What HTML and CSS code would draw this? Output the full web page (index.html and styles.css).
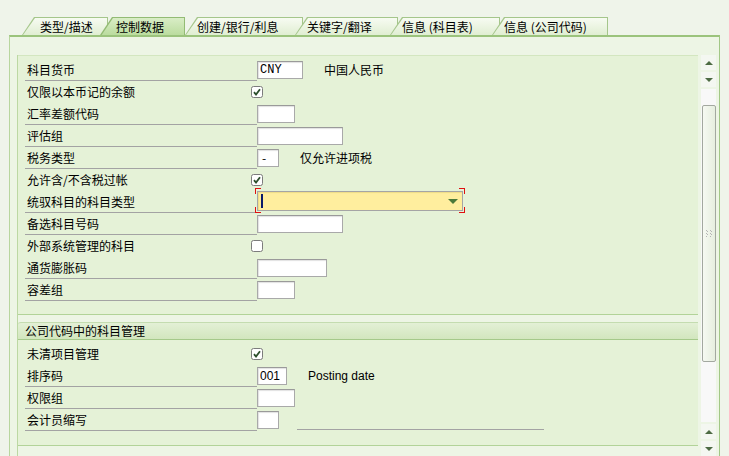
FILE: index.html
```html
<!DOCTYPE html>
<html>
<head>
<meta charset="utf-8">
<link rel="stylesheet" href="styles.css">
</head>
<body>
<div class="tabs">
  <div class="tab t1"><span class="tab-in">类型/描述</span></div>
  <div class="tab t2 active"><span class="tab-in">控制数据</span></div>
  <div class="tab t3"><span class="tab-in">创建/银行/利息</span></div>
  <div class="tab t4"><span class="tab-in">关键字/翻译</span></div>
  <div class="tab t5"><span class="tab-in">信息 (科目表)</span></div>
  <div class="tab t6"><span class="tab-in">信息 (公司代码)</span></div>
</div>
<div class="panel">
  <div class="scroll">
    <div class="group g1">
      <div class="row"><div class="lbl ul">科目货币</div><div class="inp w46 mono">CNY</div><div class="txt">中国人民币</div></div>
      <div class="row"><div class="lbl">仅限以本币记的余额</div><svg class="chk" width="12" height="12" viewBox="0 0 12 12"><rect x="0.5" y="0.5" width="11" height="11" rx="2" fill="#fff" stroke="#7c7c7c"/><path d="M3 6.2 L5 8.6 L9 3.2" stroke="#2c4f2c" stroke-width="1.8" fill="none"/></svg></div>
      <div class="row"><div class="lbl ul">汇率差额代码</div><div class="inp w38"></div></div>
      <div class="row"><div class="lbl ul">评估组</div><div class="inp w86"></div></div>
      <div class="row"><div class="lbl ul">税务类型</div><div class="inp w22 dash">-</div><div class="txt">仅允许进项税</div></div>
      <div class="row"><div class="lbl">允许含/不含税过帐</div><svg class="chk" width="12" height="12" viewBox="0 0 12 12"><rect x="0.5" y="0.5" width="11" height="11" rx="2" fill="#fff" stroke="#7c7c7c"/><path d="M3 6.2 L5 8.6 L9 3.2" stroke="#2c4f2c" stroke-width="1.8" fill="none"/></svg></div>
      <div class="row"><div class="lbl ul">统驭科目的科目类型</div><div class="focus"><div class="dd"><span class="caret"></span><span class="ddarrow"></span></div></div></div>
      <div class="row"><div class="lbl ul">备选科目号码</div><div class="inp w86"></div></div>
      <div class="row"><div class="lbl">外部系统管理的科目</div><svg class="chk" width="12" height="12" viewBox="0 0 12 12"><rect x="0.5" y="0.5" width="11" height="11" rx="2" fill="#fff" stroke="#7c7c7c"/></svg></div>
      <div class="row"><div class="lbl ul">通货膨胀码</div><div class="inp w70"></div></div>
      <div class="row"><div class="lbl ul">容差组</div><div class="inp w38"></div></div>
    </div>
    <div class="group g2">
      <div class="ghead">公司代码中的科目管理</div>
      <div class="row"><div class="lbl">未清项目管理</div><svg class="chk" width="12" height="12" viewBox="0 0 12 12"><rect x="0.5" y="0.5" width="11" height="11" rx="2" fill="#fff" stroke="#7c7c7c"/><path d="M3 6.2 L5 8.6 L9 3.2" stroke="#2c4f2c" stroke-width="1.8" fill="none"/></svg></div>
      <div class="row"><div class="lbl ul">排序码</div><div class="inp w30 latin">001</div><div class="txt latin">Posting date</div></div>
      <div class="row"><div class="lbl ul">权限组</div><div class="inp w38"></div></div>
      <div class="row"><div class="lbl ul">会计员缩写</div><div class="inp w22"></div><div class="fline"></div></div>
    </div>
  </div>
  <div class="sbar">
    <div class="sbtn"><span class="up"></span></div>
    <div class="sbtn"><span class="down"></span></div>
    <div class="track"><div class="thumb"><svg width="6" height="7" viewBox="0 0 6 7"><g fill="#b5b5b5"><rect x="0" y="0" width="1" height="1"/><rect x="0" y="3" width="1" height="1"/><rect x="0" y="6" width="1" height="1"/><rect x="4" y="0" width="1" height="1"/><rect x="4" y="3" width="1" height="1"/><rect x="4" y="6" width="1" height="1"/><rect x="1" y="1" width="1" height="1"/><rect x="1" y="4" width="1" height="1"/><rect x="5" y="1" width="1" height="1"/><rect x="5" y="4" width="1" height="1"/></g></svg></div></div>
    <div class="sbtn"><span class="up"></span></div>
    <div class="sbtn"><span class="down"></span></div>
  </div>
</div>
</body>
</html>
```
FILE: styles.css
```css
html, body {
  margin: 0;
  padding: 0;
}
body {
  width: 729px;
  height: 456px;
  overflow: hidden;
  background: #eff4ea;
  font-family: "Noto Sans CJK SC", "Liberation Sans", sans-serif;
  font-size: 12px;
  color: #000;
}

/* tabs */
.tabs {
  display: flex;
  padding: 17px 0 0 22px;
  height: 18px;
}
.tab {
  position: relative;
  height: 18px;
  margin-right: -8px;
  background: #a5c68b;
  clip-path: polygon(0 100%, 12px 0, 100% 0, 100% 100%);
}
.tab-in {
  display: block;
  height: 17px;
  margin: 1px 1px 0 1px;
  line-height: 17px;
  white-space: nowrap;
  background: linear-gradient(#f7fbf2, #e0eed2);
  clip-path: polygon(0 100%, 12px 0, 100% 0, 100% 100%);
}
.t1 { width: 86px; }
.t1 .tab-in { padding-left: 17px; }
.t2 { width: 85px; margin-right: 0; z-index: 2; }
.t2 .tab-in { padding-left: 15px; }
.t3 { width: 118px; }
.t3 .tab-in { padding-left: 11px; }
.t4 { width: 103px; }
.t4 .tab-in { padding-left: 11px; }
.t5 { width: 110px; }
.t5 .tab-in { padding-left: 11px; }
.t6 { width: 116px; }
.t6 .tab-in { padding-left: 11px; }
.active { background: #93bb74; }
.active .tab-in {
  height: 18px;
  background: linear-gradient(#d9edc6, #b9db9c);
}

/* panel */
.panel {
  box-sizing: border-box;
  margin-left: 9px;
  width: 711px;
  height: 421px;
  border-top: 2px solid #9bc37c;
  border-left: 1px solid #b8d69e;
  border-right: 1px solid #a2c786;
  background: #edf5e5;
  padding: 18px 0 0 7px;
  display: flex;
  align-items: flex-start;
}
.scroll {
  width: 680px;
  height: 401px;
  border-left: 1px solid #bcd8a3;
  display: flex;
  flex-direction: column;
}
.group {
  background: #e5f2d7;
  padding-left: 7px;
}
.g1 {
  border-top: 1px solid #d3e6c0;
  border-bottom: 1px solid #b2d398;
  padding-top: 4px;
  height: 254px;
}
.g2 {
  margin-top: 7px;
  border-bottom: 1px solid #b2d398;
  height: 123px;
  padding-left: 0;
}
.g2 .row { margin-left: 7px; }
.ghead {
  box-sizing: border-box;
  height: 18px;
  line-height: 16px;
  padding-left: 7px;
  border-top: 1px solid #c4dcb0;
  border-bottom: 1px solid #a5c98a;
  border-top-left-radius: 3px;
  background: linear-gradient(#e3f0d6, #d2e6be);
  margin-bottom: 4px;
}

/* rows */
.row {
  display: flex;
  align-items: flex-start;
  height: 22px;
}
.lbl {
  box-sizing: border-box;
  width: 232px;
  height: 21px;
  line-height: 20px;
  padding-left: 2px;
  white-space: nowrap;
}
.lbl.ul { border-bottom: 1px solid #a3a3a3; }
.inp {
  box-sizing: border-box;
  height: 18px;
  margin-top: 1px;
  background: #fff;
  border: 1px solid #a9a9a9;
  border-top-color: #9a9a9a;
  box-shadow: inset 1px 1px 1px #e2e2e2;
  line-height: 16px;
  padding-left: 2px;
  overflow: hidden;
}
.w22 { width: 22px; }
.w30 { width: 30px; }
.w38 { width: 38px; }
.w46 { width: 46px; }
.w70 { width: 70px; }
.w86 { width: 86px; }
.mono {
  font-family: "Liberation Mono", monospace;
  font-size: 12px;
}
.latin {
  font-family: "Liberation Sans", sans-serif;
  font-size: 12px;
}
.dash { padding-left: 4px; }
.txt {
  margin-left: 21px;
  line-height: 20px;
  white-space: nowrap;
}
.chk {
  display: block;
  margin: 4px 0 0 -6px;
}
.fline {
  width: 247px;
  height: 19px;
  margin-left: 18px;
  border-bottom: 1px solid #a3a3a3;
}

/* focused dropdown */
.focus {
  margin: -4px 0 0 -2px;
  padding: 3px 2px 2px 2px;
  background:
    linear-gradient(#e01010, #e01010) left top / 6px 1px no-repeat,
    linear-gradient(#e01010, #e01010) left top / 1px 6px no-repeat,
    linear-gradient(#e01010, #e01010) right top / 6px 1px no-repeat,
    linear-gradient(#e01010, #e01010) right top / 1px 6px no-repeat,
    linear-gradient(#e01010, #e01010) left bottom / 6px 1px no-repeat,
    linear-gradient(#e01010, #e01010) left bottom / 1px 6px no-repeat,
    linear-gradient(#e01010, #e01010) right bottom / 6px 1px no-repeat,
    linear-gradient(#e01010, #e01010) right bottom / 1px 6px no-repeat;
}
.dd {
  box-sizing: border-box;
  width: 206px;
  height: 20px;
  background: #ffee9e;
  border: 1px solid #a5a5a5;
  box-shadow: inset 1px 1px 1px #eedb88;
  display: flex;
  align-items: center;
  justify-content: space-between;
  padding: 0 4px 0 3px;
}
.caret {
  width: 2px;
  height: 14px;
  background: #0a1a6a;
}
.ddarrow {
  width: 0;
  height: 0;
  border-left: 5px solid transparent;
  border-right: 5px solid transparent;
  border-top: 5px solid #4c7a3a;
}

/* scrollbar */
.sbar {
  width: 15px;
  height: 401px;
  margin-left: 3px;
  display: flex;
  flex-direction: column;
}
.sbtn {
  height: 15px;
  background: #f4f7f1;
  display: flex;
  align-items: center;
  justify-content: center;
  margin-bottom: 2px;
}
.sbtn:last-child { margin-bottom: 0; }
.up {
  width: 0;
  height: 0;
  border-left: 4px solid transparent;
  border-right: 4px solid transparent;
  border-bottom: 4px solid #4d6b43;
}
.down {
  width: 0;
  height: 0;
  border-left: 4px solid transparent;
  border-right: 4px solid transparent;
  border-top: 4px solid #4d6b43;
}
.track {
  flex: 1;
  background: #f8f8f8;
  padding-top: 16px;
  margin-bottom: 2px;
}
.thumb {
  box-sizing: border-box;
  width: 14px;
  height: 257px;
  margin-left: 1px;
  border: 1px solid #a3a8a0;
  border-radius: 2px;
  background: linear-gradient(90deg, #f6f9f2, #e6eedf);
  display: flex;
  align-items: center;
  justify-content: center;
}
.thumb svg { display: block; }
```
